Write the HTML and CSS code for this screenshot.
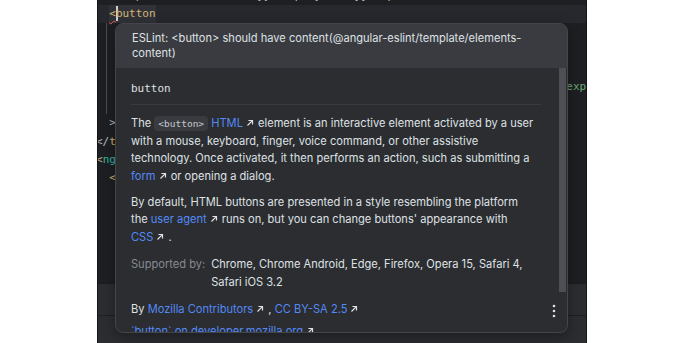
FILE: index.html
```html
<!DOCTYPE html>
<html lang="en">
<head>
  <meta charset="UTF-8" />
  <title>button – ESLint quick doc</title>
  <link rel="stylesheet" href="styles.css">
</head>
<body>

  <div class="screen">
    <div class="editor">

      <div class="code">
        <div class="guide"></div>
        <div class="lines">
          <div class="line">    <span class="tag">&lt;span</span> <span class="attr">class</span>=<span class="str">"title"</span>&gt;{{ displayName }}&lt;/<span class="tag">span</span>&gt;</div>
          <div class="line current">  <span class="word"><span class="tag err">&lt;</span><span class="caret"></span><span class="tag">button</span></span></div>
          <div class="line">    <span class="attr">type</span>=<span class="str">"button"</span></div>
          <div class="line">    <span class="attr">mat-icon-button</span></div>
          <div class="line">    (<span class="attr">click</span>)=<span class="str">"toggleMenu()"</span></div>
          <div class="line">    <span class="attr">class</span>=<span class="str">"nav-toggle"</span> <span class="attr">aria-haspopup</span>=<span class="str">"menu"</span> <span class="attr">aria-controls</span>=<span class="str">"nav"</span> <span class="attr">title</span>=<span class="str">"expand menu"</span></div>
          <div class="line">    [<span class="attr">attr.aria-expanded</span>]=<span class="str">"isOpen"</span></div>
          <div class="line">  &gt;</div>
          <div class="line">&lt;/<span class="tag">template</span>&gt;</div>
          <div class="line"><span class="tag">&lt;</span><span class="ng">ng-container</span> *<span class="attr">ngIf</span>=<span class="str">"isOpen"</span>&gt;</div>
          <div class="line">  <span class="tag">&lt;nav</span> <span class="attr">id</span>=<span class="str">"nav"</span>&gt;</div>
          <div class="line">    <span class="tag">&lt;a</span> <span class="attr">routerLink</span>=<span class="str">"/home"</span>&gt;Home&lt;/<span class="tag">a</span>&gt;</div>
          <div class="line">    <span class="tag">&lt;a</span> <span class="attr">routerLink</span>=<span class="str">"/about"</span>&gt;About&lt;/<span class="tag">a</span>&gt;</div>
          <div class="line">    <span class="tag">&lt;a</span> <span class="attr">routerLink</span>=<span class="str">"/contact"</span>&gt;Contact&lt;/<span class="tag">a</span>&gt;</div>
          <div class="line">    <span class="tag">&lt;a</span> <span class="attr">routerLink</span>=<span class="str">"/blog"</span>&gt;Blog&lt;/<span class="tag">a</span>&gt;</div>
          <div class="line">    <span class="tag">&lt;a</span> <span class="attr">routerLink</span>=<span class="str">"/help"</span>&gt;Help&lt;/<span class="tag">a</span>&gt;</div>
        </div>
      </div>

      <div class="tool-panel">
        <div class="tool-head"></div>
      </div>

      <!-- quick documentation popup -->
      <div class="popup">
        <div class="popup-head">ESLint: &lt;button&gt; should have content(@angular-eslint/template/elements-<br>content)</div>
        <div class="popup-body">
          <div class="doc">
            <div class="doc-title">button</div>
            <p>The <code>&lt;button&gt;</code> <a href="#">HTML</a><svg class="ext" viewBox="0 0 8 8"><path d="M1.5 6.5L6.3 1.7M2.4 1.5H6.5V5.6"/></svg> element is an interactive element activated by a user<br>with a mouse, keyboard, finger, voice command, or other assistive<br>technology. Once activated, it then performs an action, such as submitting a<br><a href="#">form</a><svg class="ext" viewBox="0 0 8 8"><path d="M1.5 6.5L6.3 1.7M2.4 1.5H6.5V5.6"/></svg> or opening a dialog.</p>
            <p>By default, HTML buttons are presented in a style resembling the platform<br>the <a href="#">user agent</a><svg class="ext" viewBox="0 0 8 8"><path d="M1.5 6.5L6.3 1.7M2.4 1.5H6.5V5.6"/></svg> runs on, but you can change buttons' appearance with<br><a href="#">CSS</a><svg class="ext" viewBox="0 0 8 8"><path d="M1.5 6.5L6.3 1.7M2.4 1.5H6.5V5.6"/></svg> .</p>
            <div class="support">
              <span class="support-label">Supported by:</span>
              <span>Chrome, Chrome Android, Edge, Firefox, Opera 15, Safari 4,<br>Safari iOS 3.2</span>
            </div>
            <p class="credits">By <a href="#">Mozilla Contributors</a><svg class="ext" viewBox="0 0 8 8"><path d="M1.5 6.5L6.3 1.7M2.4 1.5H6.5V5.6"/></svg> , <a href="#">CC BY-SA 2.5</a><svg class="ext" viewBox="0 0 8 8"><path d="M1.5 6.5L6.3 1.7M2.4 1.5H6.5V5.6"/></svg></p>
            <p class="mdn"><a href="#">`button` on developer.mozilla.org</a><svg class="ext" viewBox="0 0 8 8"><path d="M1.5 6.5L6.3 1.7M2.4 1.5H6.5V5.6"/></svg></p>
          </div>
          <div class="scrollbar"><div class="thumb"></div></div>
        </div>
        <button class="more" title="More actions">
          <svg viewBox="0 0 4 14" width="4" height="14"><circle cx="2" cy="2" r="1.3"/><circle cx="2" cy="7" r="1.3"/><circle cx="2" cy="12" r="1.3"/></svg>
        </button>
      </div>

    </div>
  </div>

</body>
</html>
```

FILE: styles.css
```css
* { box-sizing: border-box; }

body {
  margin: 0;
  background: #ffffff;
  font-family: 'Inter', 'Noto Sans', sans-serif;
}

.screen {
  display: flex;
  height: 343px;
  padding-left: 97px;
}

/* Editor */
.editor {
  position: relative;
  width: 490px;
  height: 343px;
  background: #1e1f22;
  border-left: 1px solid #141517;
  border-right: 1px solid #141517;
  overflow: hidden;
  display: flex;
  flex-direction: column;
}

.code {
  position: relative;
  height: 283px;
  overflow: hidden;
  flex: none;
}

.lines {
  margin: -13px 0 0 -2px;
}

.line {
  white-space: pre;
  font-family: 'DejaVu Sans Mono', monospace;
  font-size: 11px;
  line-height: 18.2px;
  height: 18.2px;
  color: #bcbec4;
}

.line.current {
  background: #26282e;
}

.line .word {
  background: #303238;
  display: inline-block;
}

.tag { color: #d5b778; }
.attr { color: #bababa; }
.str { color: #6aab73; }
.ng { color: #2fb7a4; }

.err {
  text-decoration: underline wavy #f75464;
  text-decoration-thickness: 1px;
  text-underline-offset: 3px;
}

.caret {
  display: inline-block;
  width: 0;
  height: 15px;
  border-left: 2px solid #ced0d6;
  vertical-align: -4px;
  margin-right: -2px;
}

.guide {
  position: absolute;
  left: 8px;
  top: 23px;
  width: 1px;
  height: 91px;
  background: #4a4c51;
}

.tool-panel {
  flex: 1;
  background: #2b2d30;
  border-top: 1px solid #1a1b1d;
}

.tool-head {
  height: 32px;
  border-bottom: 1px solid #1e1f22;
}

/* Popup */
.popup {
  position: absolute;
  left: 17px;
  top: 23px;
  width: 453px;
  height: 310px;
  background: #2b2d30;
  border: 1px solid #43454a;
  border-radius: 8px;
  overflow: hidden;
  display: flex;
  flex-direction: column;
  color: #dfe1e5;
  font-size: 11.1px;
  box-shadow: 0 4px 14px rgba(0,0,0,0.35);
}

.popup-head {
  background: #393b40;
  padding: 7px 16px 8px;
  line-height: 14.5px;
  white-space: nowrap;
  flex: none;
}

.popup-body {
  flex: 1;
  display: flex;
  min-height: 0;
}

.doc {
  flex: 1;
  padding: 12px 18px 0 15px;
  line-height: 17.4px;
  white-space: nowrap;
  overflow: hidden;
}

.doc-title {
  font-family: 'DejaVu Sans Mono', monospace;
  font-size: 11px;
  padding-bottom: 7px;
  border-bottom: 1px solid #393b40;
  margin-bottom: 10px;
}

.doc p {
  margin: 0 0 9px;
}

.doc a {
  color: #548af7;
  text-decoration: none;
}

.doc code {
  font-family: 'DejaVu Sans Mono', monospace;
  font-size: 9.5px;
  color: #c6c8ce;
  background: #393b40;
  padding: 2px 4px;
  border-radius: 4px;
}

.ext {
  width: 8px;
  height: 8px;
  margin: 0 1px 0 3px;
  fill: none;
  stroke: #dfe1e5;
  stroke-width: 1.2;
}

.support {
  display: flex;
  gap: 6px;
  margin: 10px 0;
}

.support-label {
  color: #868a91;
  flex: none;
}

.doc p.credits {
  margin-bottom: 5px;
}

.scrollbar {
  width: 7px;
  margin-right: 1px;
  flex: none;
}

.thumb {
  height: 224px;
  background: #4d4f54;
}

.more {
  position: absolute;
  right: 11px;
  bottom: 14px;
  background: none;
  border: none;
  padding: 0;
  display: flex;
  cursor: pointer;
}

.more svg { fill: #dfe1e5; }
```
